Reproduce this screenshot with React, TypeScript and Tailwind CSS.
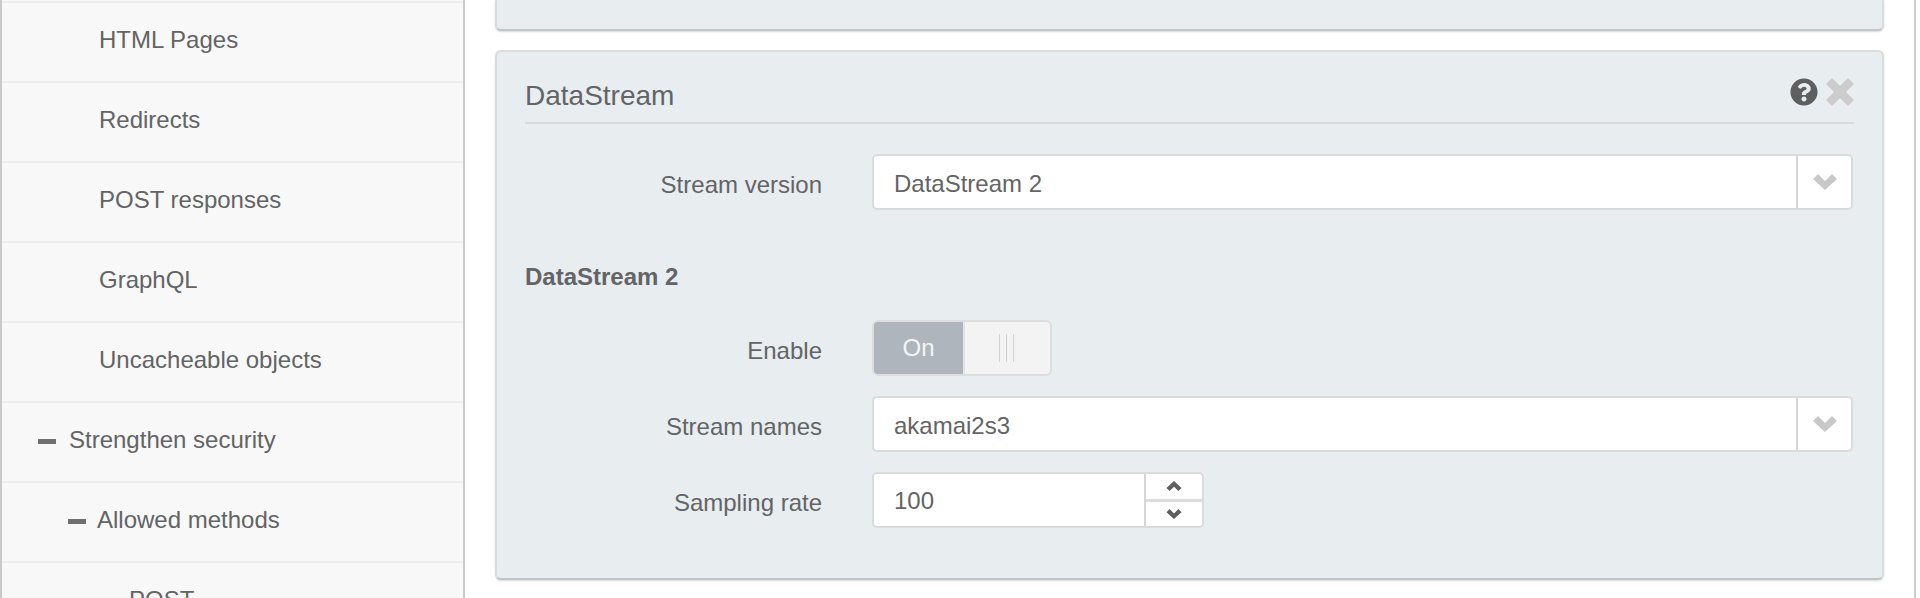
import type { ReactNode } from "react";
import { FaQuestionCircle } from "react-icons/fa";

const treeRows = [
  { label: "HTML Pages", pad: "pl-[97px]" },
  { label: "Redirects", pad: "pl-[97px]" },
  { label: "POST responses", pad: "pl-[97px]" },
  { label: "GraphQL", pad: "pl-[97px]" },
  { label: "Uncacheable objects", pad: "pl-[97px]" },
  { label: "Strengthen security", pad: "pl-[36px]", dash: "mr-[13px]" },
  { label: "Allowed methods", pad: "pl-[66px]", dash: "mr-[11px]" },
  { label: "POST", pad: "pl-[127px]" },
];

const Chevron = ({ up = false, className }: { up?: boolean; className: string }) => (
  <svg viewBox="0 0 24 16" className={className} fill="currentColor">
    <polygon points={up ? "0,11 12,0 24,11 19,16 12,9 5,16" : "0,5 5,0 12,7 19,0 24,5 12,16"} />
  </svg>
);

const Select = ({ value }: { value: string }) => (
  <div className="flex h-[56px] flex-1 items-stretch rounded-[5px] border-2 border-[#dbdbdb] bg-white">
    <div className="flex flex-1 items-center pl-[20px] pt-[3px]">{value}</div>
    <div className="flex w-[55px] items-center justify-center border-l-2 border-[#d6d6d6]">
      <Chevron className="h-[16px] w-[24px] text-[#c8c8c8]" />
    </div>
  </div>
);

const FormRow = ({ label, children, className }: { label: string; children: ReactNode; className?: string }) => (
  <div className={`flex items-center ${className ?? ""}`}>
    <div className="w-[297px] shrink-0 pt-[5px] text-right">{label}</div>
    <div className="ml-[50px] mr-[1px] flex flex-1">{children}</div>
  </div>
);

export default function App() {
  return (
    <div
      className="flex h-[598px] w-[1916px] overflow-hidden border-r-2 border-[#cccccc] bg-white text-[24px] leading-[32px] text-[#636466]"
      style={{ fontFamily: '"Liberation Sans", Arial, sans-serif' }}
    >
      <aside className="w-[465px] shrink-0 border-x-2 border-[#c9c9c9] bg-[#f8f8f8] pt-[1px]">
        <div className="border-t-2 border-[#eeeeee]">
          {treeRows.map((row) => (
            <div key={row.label} className={`flex h-[80px] items-center border-b-2 border-[#eeeeee] pb-[5px] ${row.pad}`}>
              {row.dash && <span className={`mt-[3px] h-[5px] w-[18px] bg-[#6f6f6f] ${row.dash}`} />}
              {row.label}
            </div>
          ))}
        </div>
      </aside>

      <main className="flex-1 px-[30px]">
        <div className="mb-[19px] h-[31px] rounded-b-[6px] border-x-2 border-b-2 border-[#dcdcdc] border-b-[#c2c4c5] bg-[#e8edf0] shadow-[0_1px_2px_#d8d8d8]" />

        <section className="h-[530px] rounded-[6px] border-2 border-[#dcdcdc] border-b-[#c2c4c5] bg-[#e8edf0] px-[28px] shadow-[0_1px_2px_#d8d8d8]">
          <div className="flex h-[72px] items-end justify-between border-b-2 border-[#dadada] pb-[8px]">
            <h2 className="text-[28px] leading-[36px]">DataStream</h2>
            <div className="mb-[8px] flex items-center gap-[8px]">
              <FaQuestionCircle className="h-[28px] w-[28px] text-[#5f5f5f]" />
              <svg viewBox="0 0 28 28" className="h-[28px] w-[28px] text-[#cccccc]" fill="currentColor">
                <polygon points="6,0 14,8 22,0 28,6 20,14 28,22 22,28 14,20 6,28 0,22 8,14 0,6" />
              </svg>
            </div>
          </div>

          <FormRow label="Stream version" className="mt-[30px]">
            <Select value="DataStream 2" />
          </FormRow>

          <h3 className="mb-[25px] mt-[49px] font-bold leading-[36px]">DataStream 2</h3>

          <FormRow label="Enable">
            <div className="flex h-[56px] w-[180px] overflow-hidden rounded-[6px] border-2 border-[#dddddd] bg-[#f3f3f3]">
              <div className="flex w-[91px] items-center justify-center border-r-2 border-[#e2e2e2] bg-[#aeb5bc] text-[#f4f5f6]">
                On
              </div>
              <div className="flex flex-1 items-center justify-center gap-[6px] pr-[2px]">
                <span className="h-[28px] w-[1px] bg-[#d2d2d2]" />
                <span className="h-[28px] w-[1px] bg-[#d2d2d2]" />
                <span className="h-[28px] w-[1px] bg-[#d2d2d2]" />
              </div>
            </div>
          </FormRow>

          <FormRow label="Stream names" className="mt-[20px]">
            <Select value="akamai2s3" />
          </FormRow>

          <FormRow label="Sampling rate" className="mt-[20px]">
            <div className="flex h-[56px] w-[332px] rounded-[5px] border-2 border-[#dbdbdb] bg-white">
              <div className="flex flex-1 items-center pl-[20px] pt-[1px]">100</div>
              <div className="flex w-[58px] flex-col border-l-2 border-[#d6d6d6] text-[#5f5f5f]">
                <div className="flex flex-1 items-center justify-center border-b-[3px] border-[#dbdbdb]">
                  <Chevron up className="h-[10px] w-[16px]" />
                </div>
                <div className="flex flex-1 items-center justify-center">
                  <Chevron className="h-[10px] w-[16px]" />
                </div>
              </div>
            </div>
          </FormRow>
        </section>
      </main>
    </div>
  );
}
